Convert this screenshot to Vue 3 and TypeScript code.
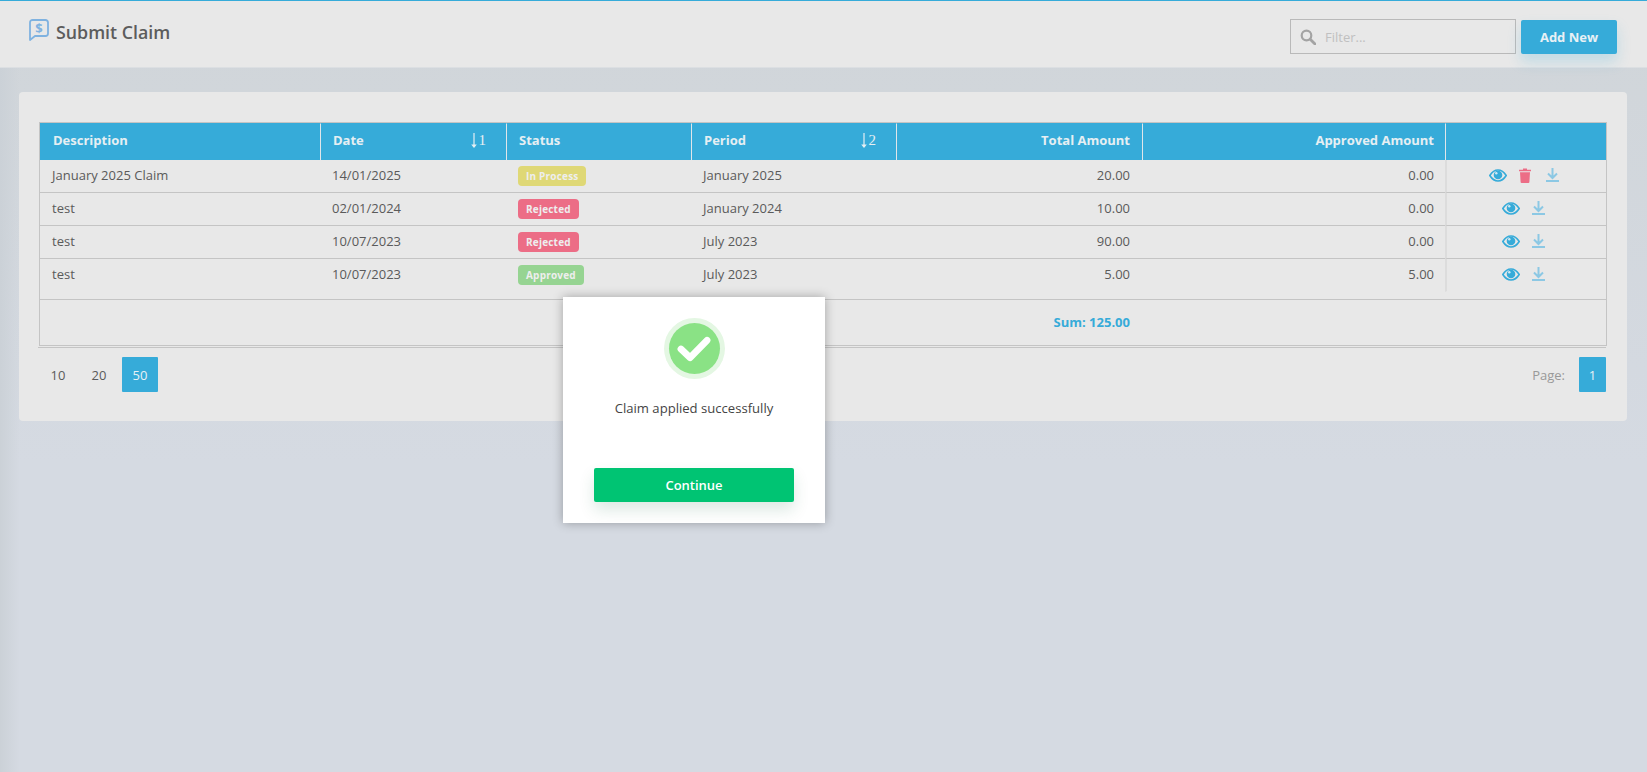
<template>
  <div class="page">
    <header class="topbar">
      <div class="title">
        <svg class="title-icon" viewBox="0 0 20 22" width="20" height="22">
          <path d="M3.5 1h13A2.5 2.5 0 0 1 19 3.5v11a2.5 2.5 0 0 1-2.500 2.500H6L1 21V3.500A2.500 2.500 0 0 1 3.500 1z" fill="none" stroke="#7fb2e0" stroke-width="1.800" stroke-linejoin="round" />
          <text x="10" y="14" text-anchor="middle" class="dollar">$</text>
        </svg>
        <h1>Submit Claim</h1>
      </div>
      <div class="tools">
        <label class="filter">
          <svg viewBox="0 0 16 16" width="16" height="16">
            <circle cx="6.500" cy="6.500" r="4.800" fill="none" stroke="#a3a3a3" stroke-width="2.200" />
            <path d="M10.200 10.200 15 15" stroke="#a3a3a3" stroke-width="2.800" stroke-linecap="round" />
          </svg>
          <input type="text" placeholder="Filter..." />
        </label>
        <button class="add-btn">Add New</button>
      </div>
    </header>

    <main class="content">
      <section class="card">
        <table class="grid">
          <colgroup>
            <col v-for="w in colWidths" :key="w" :style="{ width: w + 'px' }" />
          </colgroup>
          <thead>
            <tr>
              <th>Description</th>
              <th>
                <div class="sort-head">
                  Date
                  <span class="sort">
                    <svg viewBox="0 0 8 15" width="8" height="15"><path d="M4 0v12" stroke="#e6eff3" stroke-width="1.200" /><path d="M1.200 11.500h5.600L4 15z" fill="#e6eff3" /></svg>1
                  </span>
                </div>
              </th>
              <th>Status</th>
              <th>
                <div class="sort-head">
                  Period
                  <span class="sort">
                    <svg viewBox="0 0 8 15" width="8" height="15"><path d="M4 0v12" stroke="#e6eff3" stroke-width="1.200" /><path d="M1.200 11.500h5.600L4 15z" fill="#e6eff3" /></svg>2
                  </span>
                </div>
              </th>
              <th class="num">Total Amount</th>
              <th class="num approved-col">Approved Amount</th>
              <th></th>
            </tr>
          </thead>
          <tbody>
            <tr v-for="(row, i) in rows" :key="i" class="data-row">
              <td>{{ row.description }}</td>
              <td>{{ row.date }}</td>
              <td><span class="badge" :class="row.status.toLowerCase().replace(' ', '-')">{{ row.status }}</span></td>
              <td>{{ row.period }}</td>
              <td class="num">{{ row.total }}</td>
              <td class="num approved-col">{{ row.approved }}</td>
              <td class="actions">
                <div class="action-list">
                  <svg viewBox="0 0 18 13" width="18" height="13">
                    <path d="M.8 6.500C3 3 5.800 1 9 1s6 2 8.200 5.500C15 10 12.200 12 9 12S3 10 .8 6.500z" fill="none" stroke="#36abd9" stroke-width="1.600" />
                    <circle cx="9" cy="6" r="4.300" fill="#36abd9" />
                    <circle cx="7.300" cy="4.300" r="1.200" fill="#cfe9f5" />
                  </svg>
                  <svg v-if="row.canDelete" class="trash" viewBox="0 0 12 15" width="12" height="15">
                    <path d="M0 1.800h4V.6h4v1.200h4v1.500H0z" fill="#ec6d86" />
                    <path d="M1 4.300h10l-.6 9.700a1 1 0 0 1-1 1H2.600a1 1 0 0 1-1-1z" fill="#ec6d86" />
                  </svg>
                  <svg viewBox="0 0 13 14" width="13" height="14">
                    <path d="M6.500 0v9.500M2 5.500l4.500 4.500L11 5.500" fill="none" stroke="#8cc8e4" stroke-width="2" />
                    <path d="M0 13h13" stroke="#8cc8e4" stroke-width="2" />
                  </svg>
                </div>
              </td>
            </tr>
            <tr class="spacer"><td colspan="7"></td></tr>
          </tbody>
          <tfoot>
            <tr>
              <td colspan="4"></td>
              <td class="num sum">Sum: 125.00</td>
              <td colspan="2"></td>
            </tr>
          </tfoot>
        </table>
        <div class="grid-end"></div>

        <div class="pager">
          <div class="sizes">
            <span v-for="s in pageSizes" :key="s" class="page-box" :class="{ active: s === 50 }">{{ s }}</span>
          </div>
          <div class="pages">
            <span class="page-label">Page:</span>
            <span class="page-box one active">1</span>
          </div>
        </div>
      </section>
    </main>

    <div class="dialog">
      <div class="check">
        <svg viewBox="0 0 36 30" width="36" height="30">
          <path d="M4.500 15.500l9.500 9L31.500 6.500" fill="none" stroke="#fff" stroke-width="7" stroke-linecap="round" stroke-linejoin="round" />
        </svg>
      </div>
      <p>Claim applied successfully</p>
      <button class="continue-btn">Continue</button>
    </div>
  </div>
</template>

<script setup lang="ts">
type ClaimRow = {
  description: string
  date: string
  status: 'In Process' | 'Rejected' | 'Approved'
  period: string
  total: string
  approved: string
  canDelete?: boolean
}

const colWidths = [280, 186, 185, 205, 246, 303, 161]
const pageSizes = [10, 20, 50]

const rows: ClaimRow[] = [
  { description: 'January 2025 Claim', date: '14/01/2025', status: 'In Process', period: 'January 2025', total: '20.00', approved: '0.00', canDelete: true },
  { description: 'test', date: '02/01/2024', status: 'Rejected', period: 'January 2024', total: '10.00', approved: '0.00' },
  { description: 'test', date: '10/07/2023', status: 'Rejected', period: 'July 2023', total: '90.00', approved: '0.00' },
  { description: 'test', date: '10/07/2023', status: 'Approved', period: 'July 2023', total: '5.00', approved: '5.00' },
]
</script>

<style>
html,
body {
  margin: 0;
  background: #d5dae2;
}
</style>

<style scoped>
.page {
  position: relative;
  width: 1647px;
  height: 772px;
  overflow: hidden;
  font-family: "Open Sans", "Liberation Sans", sans-serif;
  font-size: 13px;
  color: #5a5a5a;
  background: linear-gradient(#d0d5d9, #d5dae2 60%);
}

.topbar {
  display: flex;
  justify-content: space-between;
  height: 66px;
  padding: 0 30px 0 29px;
  background: #e8e8e8;
  border-top: 1px solid #36abd9;
  border-bottom: 1px solid #dcdfe2;
}

.title {
  display: flex;
  align-items: flex-start;
  gap: 7px;
  padding-top: 18px;
}

.title h1 {
  margin: 1px 0 0;
  font-size: 17.800px;
  line-height: 24px;
  font-weight: 600;
  color: #5c5c5c;
}

.dollar {
  font-family: "Open Sans", sans-serif;
  font-size: 13px;
  font-weight: 700;
  fill: #7fb2e0;
}

.tools {
  display: flex;
  align-items: flex-start;
  gap: 5px;
  padding-top: 18px;
}

.filter {
  display: flex;
  align-items: center;
  gap: 7px;
  width: 226px;
  height: 35px;
  padding-left: 9px;
  box-sizing: border-box;
  border: 1px solid #b9b9b9;
}

.filter input {
  flex: 1;
  min-width: 0;
  border: 0;
  outline: 0;
  background: transparent;
  font: inherit;
}

.filter input::placeholder {
  color: #c0c0c0;
}

.add-btn {
  width: 96px;
  height: 34px;
  margin-top: 1px;
  border: 0;
  border-radius: 2px;
  background: #36abd9;
  color: #e8f1f5;
  font: 700 13px "Open Sans", sans-serif;
  box-shadow: 0 8px 14px rgba(54, 171, 217, 0.22);
}

.content {
  height: 704px;
  padding: 24px 20px 0 19px;
  background: linear-gradient(90deg, #cbd1d7, transparent 20px);
}

.card {
  height: 329px;
  padding: 30px 21px 0 20px;
  box-sizing: border-box;
  background: #e8e8e8;
  border-radius: 4px;
}

.grid {
  width: 1566px;
  table-layout: fixed;
  border-collapse: separate;
  border-spacing: 0;
  border: 1px solid #c4c4c4;
}

.grid-end {
  height: 1px;
  margin: 1px 0 0 -1px;
  background: #c4c4c4;
}

.grid th {
  height: 37px;
  padding: 0 12px 4px;
  box-sizing: border-box;
  text-align: left;
  background: #36abd9;
  color: #e6eff3;
  font-size: 13px;
  font-weight: 700;
  border-left: 1px solid #e0e6ea;
  border-top: 1px solid #36abd9;
}

.grid th:first-child {
  padding-left: 13px;
  border-left: 0;
}

.grid td {
  padding: 0 12px;
  overflow: hidden;
  white-space: nowrap;
}

.data-row td {
  height: 33px;
  border-bottom: 1px solid #c4c4c4;
  padding-bottom: 2px;
  box-sizing: border-box;
}

.data-row:nth-child(4) td {
  border-bottom-color: transparent;
}

.grid .num {
  text-align: right;
}

.grid .approved-col {
  padding-right: 11px;
}

.sort-head {
  display: flex;
  justify-content: space-between;
  align-items: center;
}

.sort {
  display: flex;
  align-items: center;
  gap: 1px;
  font-family: "Liberation Serif", serif;
  font-weight: 400;
  font-size: 15px;
  margin-right: 8px;
}

.badge {
  display: inline-block;
  height: 20px;
  margin-top: 2px;
  padding: 0 8px;
  border-radius: 4px;
  font-size: 10px;
  font-weight: 700;
  line-height: 20px;
  letter-spacing: 0.200px;
  color: #eeeeee;
  vertical-align: middle;
}

.in-process {
  background: #dfd876;
}

.rejected {
  background: #ec6d86;
}

.approved {
  background: #96d492;
}

.grid .actions {
  padding: 0 6px 2px 0;
  border-left: 2px solid #dcdcdc;
}

.action-list {
  display: flex;
  justify-content: center;
  align-items: center;
  gap: 12px;
}

.trash {
  margin-right: 3px;
}

.spacer td {
  height: 7px;
  padding: 0;
  border-bottom: 1px solid #c4c4c4;
}

tfoot td {
  height: 45px;
  box-sizing: border-box;
}

.grid .sum {
  color: #36abd9;
  font-weight: 700;
  padding-bottom: 2px;
}

.pager {
  display: flex;
  justify-content: space-between;
  margin-top: 9px;
}

.sizes {
  display: flex;
  gap: 5px;
  padding-left: 1px;
}

.page-box {
  display: flex;
  align-items: center;
  justify-content: center;
  width: 36px;
  height: 35px;
}

.page-box.active {
  background: #36abd9;
  color: #e8f1f5;
  border-radius: 1px;
}

.pages {
  display: flex;
  align-items: center;
  gap: 14px;
}

.page-label {
  color: #999999;
}

.page-box.one {
  width: 27px;
}

.dialog {
  position: absolute;
  left: 563px;
  top: 297px;
  display: flex;
  flex-direction: column;
  align-items: center;
  width: 262px;
  height: 226px;
  box-sizing: border-box;
  padding-top: 26px;
  background: #ffffff;
  box-shadow: 0 0 10px rgba(0, 0, 0, 0.3);
  color: #444444;
}

.check {
  display: flex;
  align-items: center;
  justify-content: center;
  width: 51px;
  height: 51px;
  border-radius: 50%;
  background: #8ae285;
  box-shadow: 0 0 0 5px #e4f7e3;
}

.check svg {
  width: 36px;
  height: 29px;
}

.dialog p {
  margin: 25px 0 0;
  font-size: 13.100px;
  line-height: 18px;
}

.continue-btn {
  width: 200px;
  height: 34px;
  margin-top: 51px;
  border: 0;
  border-radius: 2px;
  background: #00c473;
  color: #ffffff;
  font: 600 13px "Open Sans", sans-serif;
  box-shadow: 0 8px 16px rgba(0, 100, 60, 0.14);
}
</style>
